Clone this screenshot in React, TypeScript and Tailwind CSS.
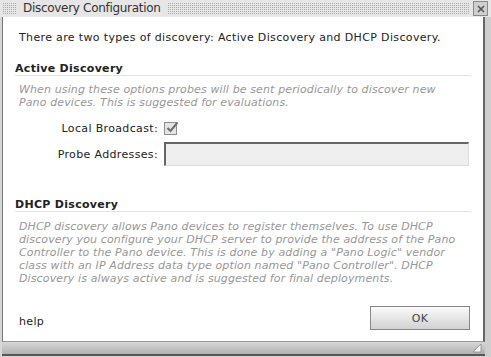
import React from "react";

const dots =
  "bg-[conic-gradient(#a8a8a8_0_25%,#e6e6e6_0_100%)] bg-[length:2px_2px]";

export default function App() {
  return (
    <div
      className="w-[491px] h-[357px] bg-[#d6d6d6] flex flex-col overflow-hidden text-[#222]"
      style={{ fontFamily: '"DejaVu Sans", Verdana, sans-serif' }}
    >
      {/* title bar */}
      <div className="h-[17px] flex items-center bg-[#e6e6e6] pr-[3px]">
        <div className={`ml-[2px] w-[15px] h-[11px] ${dots}`} />
        <div className="px-[6px] text-[12px] leading-[17px] text-[#333] tracking-[-0.3px]">
          Discovery Configuration
        </div>
        <div className={`flex-1 h-[11px] ${dots}`} />
        <div className="ml-[3px] w-[15px] h-[15px] border border-[#8a8a8a] bg-[#cfcfcf] flex items-center justify-center">
          <svg width="8" height="8" viewBox="0 0 8 8">
            <path d="M1 1 L7 7 M7 1 L1 7" stroke="#555" strokeWidth="1.6" />
          </svg>
        </div>
      </div>

      {/* body */}
      <div className="flex-1 flex min-h-0">
        <div className="ml-[2px] w-[483px] bg-white border-l border-[#777] border-r-2 border-r-[#666] border-b border-b-[#999] flex flex-col px-[12px] text-[11px] leading-[13px]">
          <div className="mt-[14px] pl-[4px] tracking-[0.35px]">
            There are two types of discovery: Active Discovery and DHCP Discovery.
          </div>

          <div className="mt-[18px] font-bold border-b border-[#e2e2e2] h-[14px] tracking-[0.3px]">
            Active Discovery
          </div>
          <div className="mt-[7px] pl-[4px] italic text-[#979797] tracking-[0.12px]">
            When using these options probes will be sent periodically to discover new
            <br />
            Pano devices. This is suggested for evaluations.
          </div>

          <div className="mt-[13px] flex items-center h-[13px] tracking-[0.35px]">
            <div className="w-[143px] text-right">Local Broadcast:</div>
            <div className="ml-[6px] w-[13px] h-[13px] border border-[#8e8e8e] bg-[#e4e4e4] relative">
              <svg
                className="absolute left-[0px] top-[-3px]"
                width="15"
                height="15"
                viewBox="0 0 15 15"
              >
                <path
                  d="M2.5 8 L5.5 11 L12.5 2.5"
                  fill="none"
                  stroke="#6e6e6e"
                  strokeWidth="2"
                />
              </svg>
            </div>
          </div>

          <div className="mt-[7px] flex items-center h-[24px] tracking-[0.35px]">
            <div className="w-[143px] text-right">Probe Addresses:</div>
            <div className="ml-[6px] w-[305px] h-[24px] bg-[#efefef] border-t-2 border-l-2 border-[#666] border-r border-b border-r-[#dcdcdc] border-b-[#dcdcdc]" />
          </div>

          <div className="mt-[32px] font-bold border-b border-[#e2e2e2] h-[14px] tracking-[0.3px]">
            DHCP Discovery
          </div>
          <div className="mt-[8px] pl-[4px] italic text-[#979797] tracking-[0.12px]">
            DHCP discovery allows Pano devices to register themselves. To use DHCP
            <br />
            discovery you configure your DHCP server to provide the address of the Pano
            <br />
            Controller to the Pano device. This is done by adding a "Pano Logic" vendor
            <br />
            class with an IP Address data type option named "Pano Controller". DHCP
            <br />
            Discovery is always active and is suggested for final deployments.
          </div>

          <div className="mt-auto mb-[11px] flex items-center justify-between tracking-[0.35px]">
            <div className="pl-[4px] pt-[7px]">help</div>
            <div className="w-[100px] h-[24px] border border-[#888] bg-gradient-to-b from-[#fafafa] to-[#d2d2d2] flex items-center justify-center text-[#444] text-[11px] mr-[1px]">
              OK
            </div>
          </div>
        </div>
        <div className="flex-1 bg-[#cfcfcf]" />
      </div>

      {/* bottom bar */}
      <div className="h-[15px] flex">
        <div className="ml-[2px] w-[483px] h-[14px] bg-gradient-to-b from-[#d8d8d8] to-[#b0b0b0] border-b-2 border-[#555] relative">
          <svg className="absolute right-[3px] bottom-[1px]" width="10" height="10" viewBox="0 0 10 10">
            <path d="M9 1 L1 9 L9 9 Z" fill="#f4f4f4" stroke="#888" strokeWidth="0.8" />
          </svg>
        </div>
        <div className="flex-1 bg-[#cfcfcf]" />
      </div>
    </div>
  );
}
